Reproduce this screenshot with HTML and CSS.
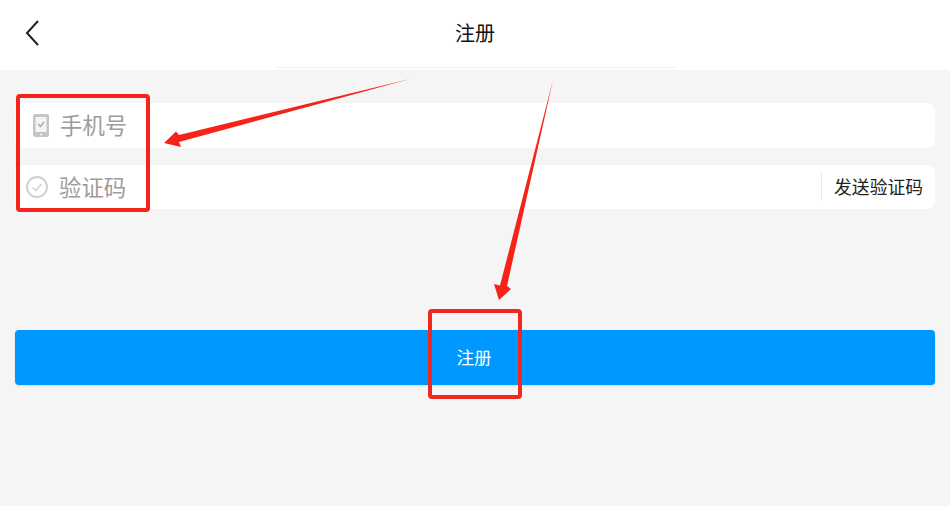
FILE: index.html
```html
<!DOCTYPE html>
<html lang="zh-CN">
<head>
<meta charset="utf-8">
<title>注册</title>
<link rel="stylesheet" href="styles.css">
</head>
<body>
<div class="page">
  <header class="topbar">
    <svg class="back" width="16" height="28" viewBox="0 0 16 28"><path d="M14 2 L3 14 L14 26" fill="none" stroke="#222" stroke-width="2"/></svg>
    <h1 class="title">注册</h1>
    <div class="topline"></div>
  </header>
  <main class="form">
    <div class="field phone">
      <svg class="icon-phone" width="16" height="23" viewBox="0 0 16 23"><rect x="0" y="0" width="16" height="23" rx="2.500" fill="#c4c4c4"/><rect x="2.500" y="3" width="11" height="15" fill="#f4f4f4"/><path d="M5 10 L7.500 12.500 L11 8" fill="none" stroke="#adadad" stroke-width="1.500"/><circle cx="8" cy="20.500" r="1" fill="#f4f4f4"/></svg>
      <span class="placeholder">手机号</span>
    </div>
    <div class="field code">
      <svg class="icon-check" width="22" height="22" viewBox="0 0 22 22"><circle cx="11" cy="11" r="10" fill="none" stroke="#cfcfcf" stroke-width="1.800"/><path d="M6.500 11.500 L10 14.500 L15.500 8" fill="none" stroke="#cfcfcf" stroke-width="1.500"/></svg>
      <span class="placeholder">验证码</span>
      <span class="send">发送验证码</span>
    </div>
    <button class="submit" type="button">注册</button>
  </main>
  <svg class="marks" width="950" height="506" viewBox="0 0 950 506">
    <rect x="18" y="96" width="130" height="114" rx="2" fill="none" stroke="#f5231a" stroke-width="4"/>
    <rect x="430" y="311" width="90" height="86" rx="2" fill="none" stroke="#ee2a20" stroke-width="4"/>
    <path d="M410 79 L179 135 L176 131.500 L164 143 L181 147 L179 142 Z" fill="#f5231a"/>
    <path d="M553 80 L500 285.500 L494 284 L499 300 L511 289 L507 286 Z" fill="#f5231a"/>
  </svg>
</div>
</body>
</html>
```
FILE: styles.css
```css
* { box-sizing: border-box; }
html, body { margin: 0; padding: 0; }
body { background: #f5f5f5; font-family: "Noto Sans CJK SC", "Noto Sans", sans-serif; }
.page { position: relative; width: 950px; height: 506px; overflow: hidden; background: #f5f5f5; }
.topbar { position: relative; height: 70px; background: #fff; display: flex; align-items: center; justify-content: center; padding-bottom: 4px; }
.back { position: absolute; left: 24px; top: 19px; }
.title { margin: 0; font-size: 20px; font-weight: 400; color: #111; line-height: 28px; }
.topline { position: absolute; left: 275px; top: 67px; width: 401px; height: 1px; background: #f2f2f2; }
.form { padding: 33px 15px 0; display: flex; flex-direction: column; }
.field { background: #fff; border-radius: 8px; display: flex; align-items: center; }
.phone { height: 45px; padding-left: 18px; padding-bottom: 1px; }
.code { height: 44px; margin-top: 17px; padding-left: 11px; padding-right: 12px; padding-bottom: 1px; }
.placeholder { font-size: 22.4px; color: #9c9c9c; line-height: 30px; }
.phone .placeholder { margin-left: 11px; margin-bottom: 3px; }
.code .placeholder { margin-left: 11px; margin-bottom: 1px; }
.send { margin-left: auto; height: 28px; line-height: 26px; padding-left: 12px; border-left: 1px solid #e6e6e6; font-size: 17.8px; color: #222; }
.submit { margin-top: 121px; height: 55px; border: 0; border-radius: 4px; background: #0098ff; color: #fff; font-family: inherit; font-size: 17.6px; box-shadow: 0 1px 2px rgba(0,0,0,.12); padding: 0 2px 2px 0; }
.marks { position: absolute; left: 0; top: 0; pointer-events: none; }
```
